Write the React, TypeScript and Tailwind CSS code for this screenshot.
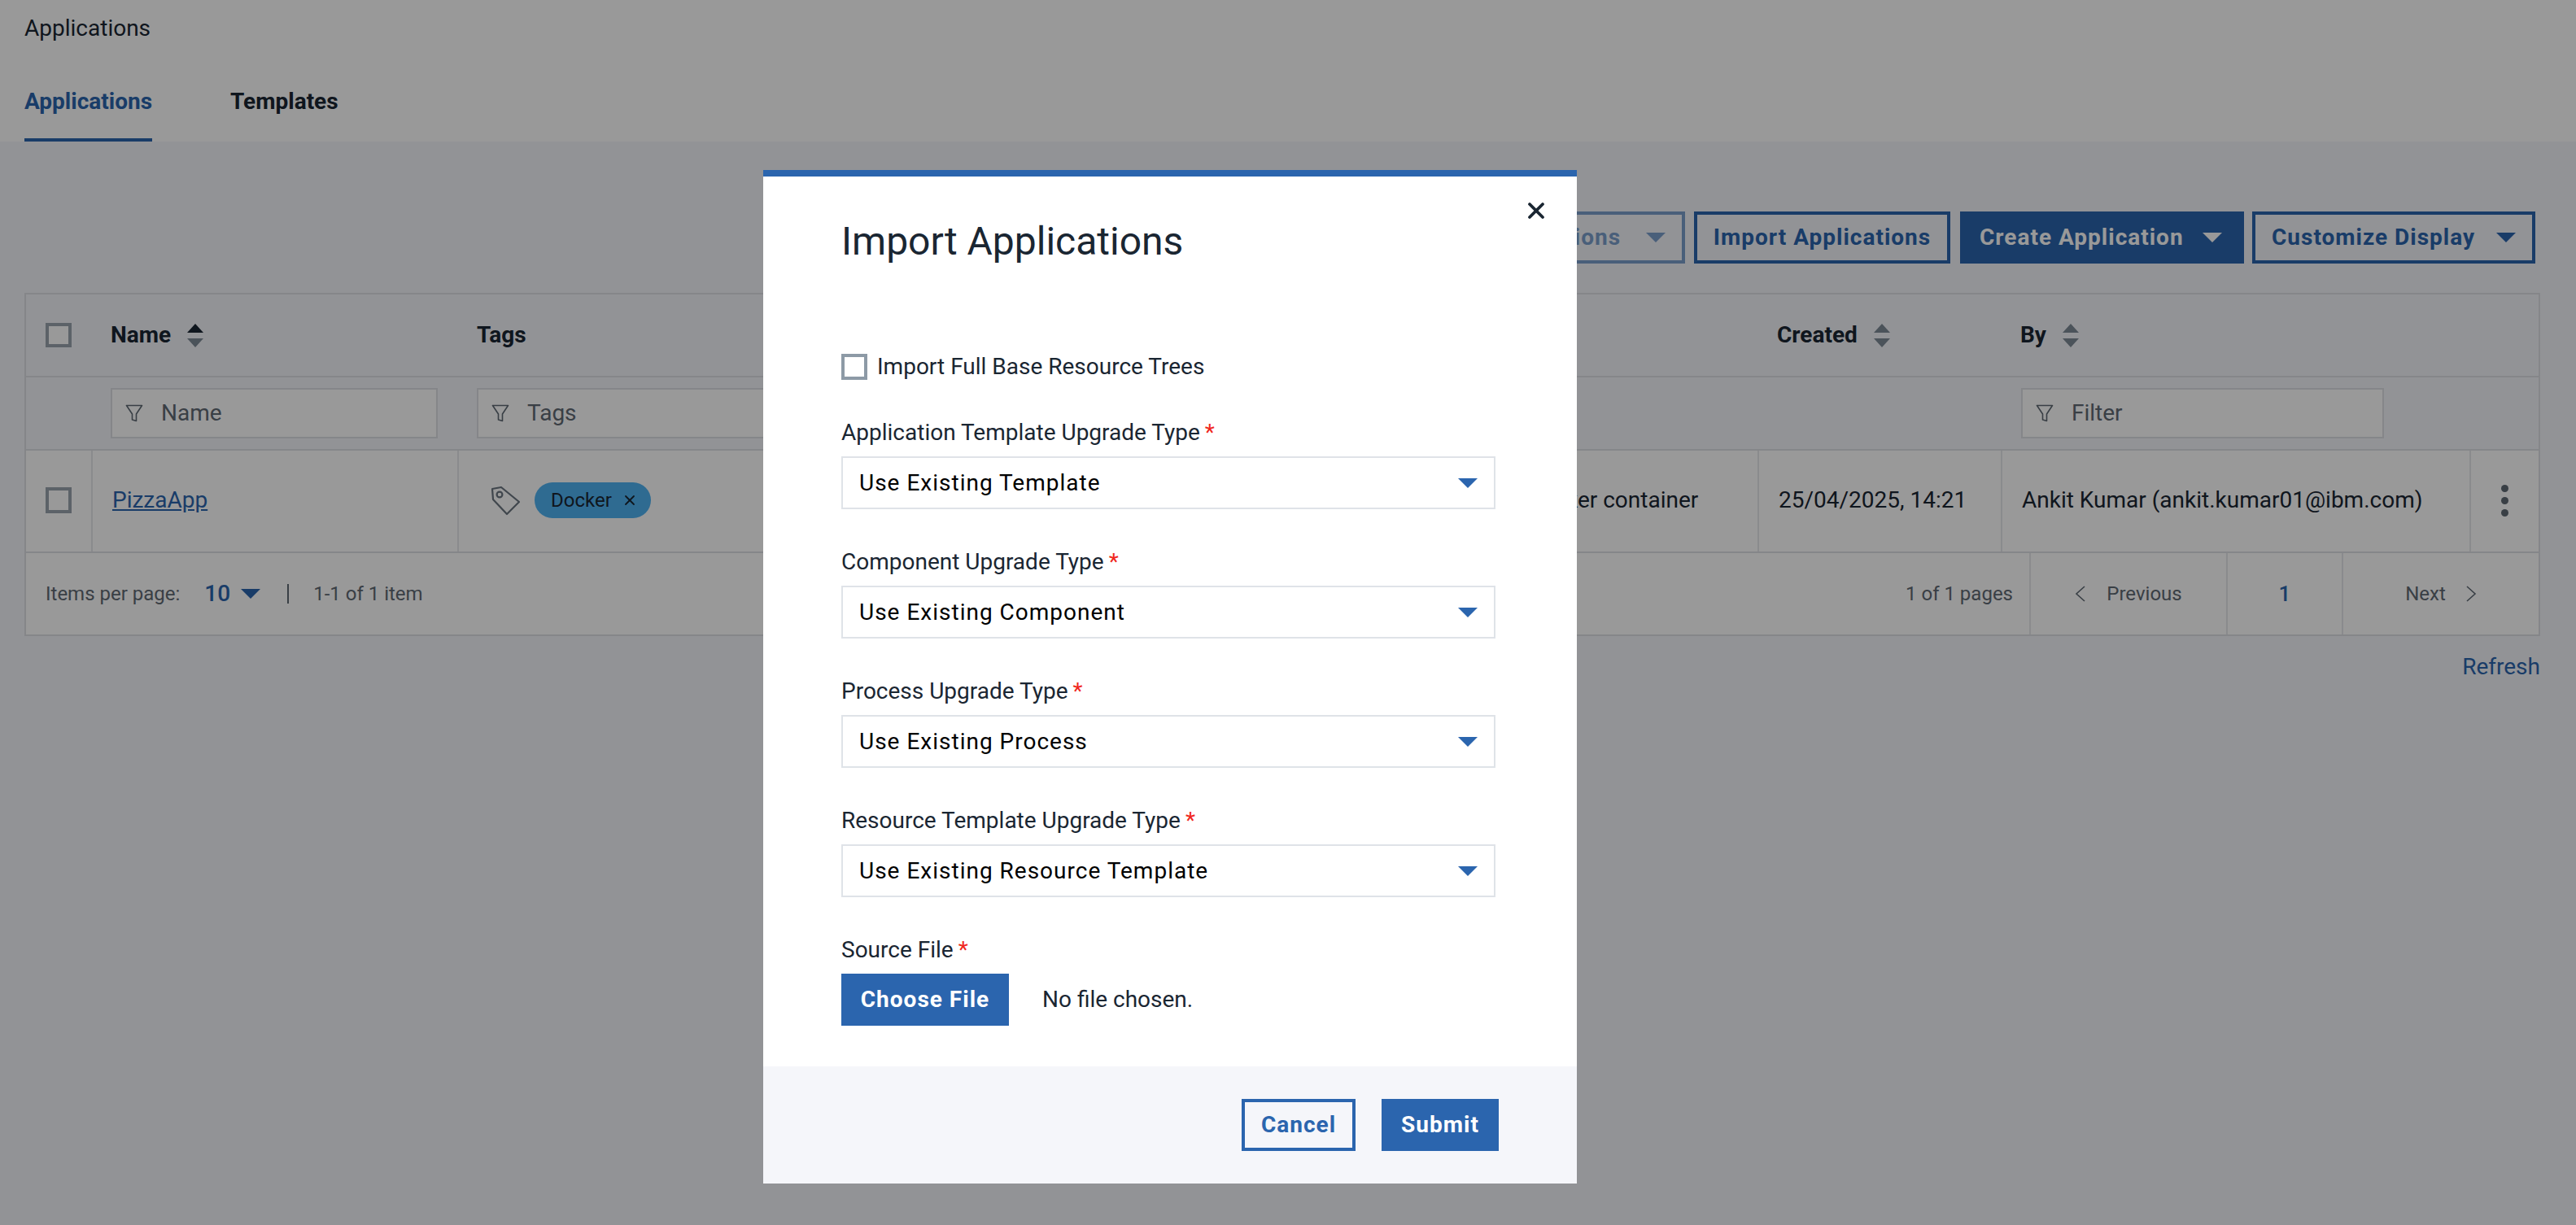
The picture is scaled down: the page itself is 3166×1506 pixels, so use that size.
import { X } from "lucide-react";

const columns = "grid grid-cols-[82px_450px_1288px_310px_299px_576px_1fr]";

function Triangle({ className }: { className: string }) {
  return (
    <svg viewBox="0 0 24 12" className={className} fill="currentColor">
      <path d="M0 0h24L12 12z" />
    </svg>
  );
}

function SortIcon({ active }: { active?: boolean }) {
  return (
    <span className="flex flex-col gap-[7px] ml-[20px]">
      <svg viewBox="0 0 20 11" className={`w-[20px] h-[11px] ${active ? "text-[#1a2632]" : "text-[#7d8a96]"}`} fill="currentColor">
        <path d="M10 0l10 11H0z" />
      </svg>
      <svg viewBox="0 0 20 11" className="w-[20px] h-[11px] text-[#7d8a96]" fill="currentColor">
        <path d="M0 0h20L10 11z" />
      </svg>
    </span>
  );
}

function Checkbox({ className }: { className: string }) {
  return <span className={`block w-[32px] bg-white border-[4px] ${className}`} />;
}

function FilterInput({ label, width }: { label: string; width: string }) {
  return (
    <div className={`${width} h-[62px] bg-white border-2 border-[#dee0e4] flex items-center pl-[16px] text-[28px] text-[#5f6974]`}>
      <svg viewBox="0 0 22 22" className="w-[22px] h-[22px] mr-[22px]" fill="none" stroke="currentColor" strokeWidth="1.6" strokeLinejoin="round">
        <path d="M1.5 1.5h19L13.5 12v8.5l-5-1.5v-7z" />
      </svg>
      {label}
    </div>
  );
}

function ToolbarButton({ label, width, solid, faded }: { label: string; width: string; solid?: boolean; faded?: boolean }) {
  return (
    <button
      className={`${width} h-[64px] border-[4px] border-[#2b65ae] flex items-center justify-between pl-[20px] text-[28px] font-bold tracking-[1px] ${
        solid ? "bg-[#2b65ae] text-white pr-[23px]" : "text-[#2b65ae] pr-[20px]"
      } ${faded ? "opacity-60" : ""}`}
    >
      {label}
      <Triangle className="w-[24px] h-[12px]" />
    </button>
  );
}

function Field({ label, value }: { label: string; value: string }) {
  return (
    <div>
      <label className="block h-[32px] leading-[36px] text-[28px] text-[#1a2632]">
        {label}
        <span className="text-[#f0281e] ml-[6px]">*</span>
      </label>
      <div className="mt-[15px] h-[65px] border-2 border-[#dfe3e8] flex items-center justify-between pl-[20px] pr-[20px] text-[28px] tracking-[1px] text-black">
        {value}
        <Triangle className="w-[24px] h-[12px] text-[#2b65ae]" />
      </div>
    </div>
  );
}

function ImportModal() {
  return (
    <div className="fixed inset-0 bg-black/40 pl-[938px] pt-[209px]">
      <div className="relative w-[1000px] h-[1246px] bg-white border-t-[8px] border-[#2b65ae] flex flex-col">
        <button className="absolute top-[26px] right-[34px] text-[#1a2632]">
          <X className="w-[32px] h-[32px]" strokeWidth={2.8} />
        </button>
        <div className="flex-1 pl-[96px] pr-[100px] pt-[52px]">
          <h2 className="h-[56px] leading-[56px] text-[48px] text-[#1a2632]">Import Applications</h2>
          <div className="mt-[110px] h-[32px] flex items-center gap-[12px] text-[28px] text-[#1a2632]">
            <Checkbox className="h-[32px] border-[#8d9aa6]" />
            Import Full Base Resource Trees
          </div>
          <div className="mt-[47px] flex flex-col gap-[47px]">
            <Field label="Application Template Upgrade Type" value="Use Existing Template" />
            <Field label="Component Upgrade Type" value="Use Existing Component" />
            <Field label="Process Upgrade Type" value="Use Existing Process" />
            <Field label="Resource Template Upgrade Type" value="Use Existing Resource Template" />
            <div>
              <label className="block h-[32px] leading-[36px] text-[28px] text-[#1a2632]">
                Source File
                <span className="text-[#f0281e] ml-[6px]">*</span>
              </label>
              <div className="mt-[15px] flex items-center gap-[41px] text-[28px] text-[#1a2632]">
                <button className="w-[206px] h-[64px] bg-[#2b65ae] text-white font-bold tracking-[1px]">Choose File</button>
                No file chosen.
              </div>
            </div>
          </div>
        </div>
        <div className="h-[144px] bg-[#f5f6fa] flex items-center justify-end gap-[32px] pr-[96px]">
          <button className="w-[140px] h-[64px] border-[4px] border-[#2b65ae] text-[28px] font-bold tracking-[1px] text-[#2b65ae]">Cancel</button>
          <button className="w-[144px] h-[64px] bg-[#2b65ae] text-[28px] font-bold tracking-[1px] text-white">Submit</button>
        </div>
      </div>
    </div>
  );
}

export default function App() {
  return (
    <div className="relative h-[1506px] overflow-hidden bg-[#f4f5fa] font-['Roboto',sans-serif] text-[#1a2632]">
      <header className="h-[174px] bg-white pl-[30px]">
        <div className="h-[70px] flex items-center text-[28px]">Applications</div>
        <nav className="flex gap-[96px] h-[104px] text-[28px] font-bold">
          <a className="h-full pt-[34px] border-b-[4px] border-[#2b65ae] text-[#2b65ae]">Applications</a>
          <a className="h-full pt-[34px]">Templates</a>
        </nav>
      </header>

      <div className="pt-[86px] pr-[50px] flex justify-end gap-[11px]">
        <ToolbarButton label="Bulk Actions" width="w-[274px]" faded />
        <button className="w-[315px] h-[64px] border-[4px] border-[#2b65ae] text-[28px] font-bold tracking-[1px] text-[#2b65ae]">Import Applications</button>
        <ToolbarButton label="Create Application" width="w-[349px] ml-px -mr-px" solid />
        <ToolbarButton label="Customize Display" width="w-[348px]" />
      </div>

      <div className="mt-[36px] mx-[30px] w-[3092px] border-2 border-[#dee0e4]">
        <div className={`${columns} h-[102px] items-center text-[28px] font-bold border-b-2 border-[#dee0e4]`}>
          <div className="pl-[24px]">
            <Checkbox className="h-[30px] border-[#9aa3ad]" />
          </div>
          <div className="pl-[22px] flex items-center">
            Name
            <SortIcon active />
          </div>
          <div className="pl-[22px]">Tags</div>
          <div />
          <div className="pl-[22px] flex items-center">
            Created
            <SortIcon />
          </div>
          <div className="pl-[22px] flex items-center">
            By
            <SortIcon />
          </div>
          <div />
        </div>

        <div className={`${columns} h-[90px] items-center border-b-2 border-[#dee0e4]`}>
          <div />
          <div className="pl-[22px]">
            <FilterInput label="Name" width="w-[402px]" />
          </div>
          <div className="pl-[22px]">
            <FilterInput label="Tags" width="w-[402px]" />
          </div>
          <div />
          <div />
          <div className="pl-[23px]">
            <FilterInput label="Filter" width="w-[446px]" />
          </div>
          <div />
        </div>

        <div className={`${columns} h-[126px] bg-white text-[28px] border-b-2 border-[#dee0e4]`}>
          <div className="flex items-center pb-[2px] pl-[24px] border-r-2 border-[#e6e8eb]">
            <Checkbox className="h-[32px] border-[#9aa3ad]" />
          </div>
          <div className="flex items-center pb-[2px] pl-[24px] border-r-2 border-[#e6e8eb]">
            <a className="text-[#2b65ae] underline">PizzaApp</a>
          </div>
          <div className="flex items-center pb-[2px] pl-[38px] border-r-2 border-[#e6e8eb]">
            <svg viewBox="0 0 38 38" className="w-[38px] h-[38px] text-[#6b7680]" fill="none" stroke="currentColor" strokeWidth="2.2" strokeLinejoin="round">
              <path d="M3 5l11-2 22 18-15 15L4 18z" />
              <circle cx="12" cy="12" r="3.4" />
            </svg>
            <span className="ml-[17px] w-[143px] h-[44px] rounded-full bg-[#4fb3f2] flex items-center justify-between pl-[20px] pr-[16px] text-[24px]">
              Docker
              <X className="w-[20px] h-[20px]" strokeWidth={2.2} />
            </span>
          </div>
          <div className="flex items-center pb-[2px] pl-[24px] border-r-2 border-[#e6e8eb]">Docker container</div>
          <div className="flex items-center pb-[2px] pl-[24px] border-r-2 border-[#e6e8eb]">25/04/2025, 14:21</div>
          <div className="flex items-center pb-[2px] pl-[24px] border-r-2 border-[#e6e8eb]">Ankit Kumar (ankit.kumar01@ibm.com)</div>
          <div className="flex flex-col items-center justify-center pb-[2px] gap-[6px]">
            <span className="w-[9px] h-[9px] rounded-full bg-[#5f6974]" />
            <span className="w-[9px] h-[9px] rounded-full bg-[#5f6974]" />
            <span className="w-[9px] h-[9px] rounded-full bg-[#5f6974]" />
          </div>
        </div>

        <div className="h-[100px] bg-white flex text-[24px] text-[#5f6974]">
          <div className="flex-1 flex items-center pl-[24px]">
            Items per page:
            <span className="ml-[30px] text-[28px] font-medium text-[#2b65ae]">10</span>
            <Triangle className="ml-[13px] w-[24px] h-[12px] text-[#2b65ae]" />
            <span className="ml-[33px] w-[2px] h-[24px] bg-[#5f6974]" />
            <span className="ml-[30px]">1-1 of 1 item</span>
          </div>
          <div className="flex items-center pr-[20px]">1 of 1 pages</div>
          <div className="w-[242px] flex items-center justify-center gap-[25px] border-l-2 border-[#e6e8eb]">
            <svg viewBox="0 0 14 20" className="w-[14px] h-[20px]" fill="none" stroke="currentColor" strokeWidth="1.6">
              <path d="M12 1L2 10l10 9" />
            </svg>
            Previous
          </div>
          <div className="w-[142px] flex items-center justify-center border-l-2 border-[#e6e8eb] text-[26px] font-medium text-[#2b65ae]">1</div>
          <div className="w-[242px] flex items-center justify-center gap-[24px] border-l-2 border-[#e6e8eb]">
            Next
            <svg viewBox="0 0 14 20" className="w-[14px] h-[20px]" fill="none" stroke="currentColor" strokeWidth="1.6">
              <path d="M2 1l10 9-10 9" />
            </svg>
          </div>
        </div>
      </div>

      <div className="w-[3122px] mt-[20px] text-right text-[28px] leading-[36px] text-[#2b65ae]">Refresh</div>

      <ImportModal />
    </div>
  );
}
